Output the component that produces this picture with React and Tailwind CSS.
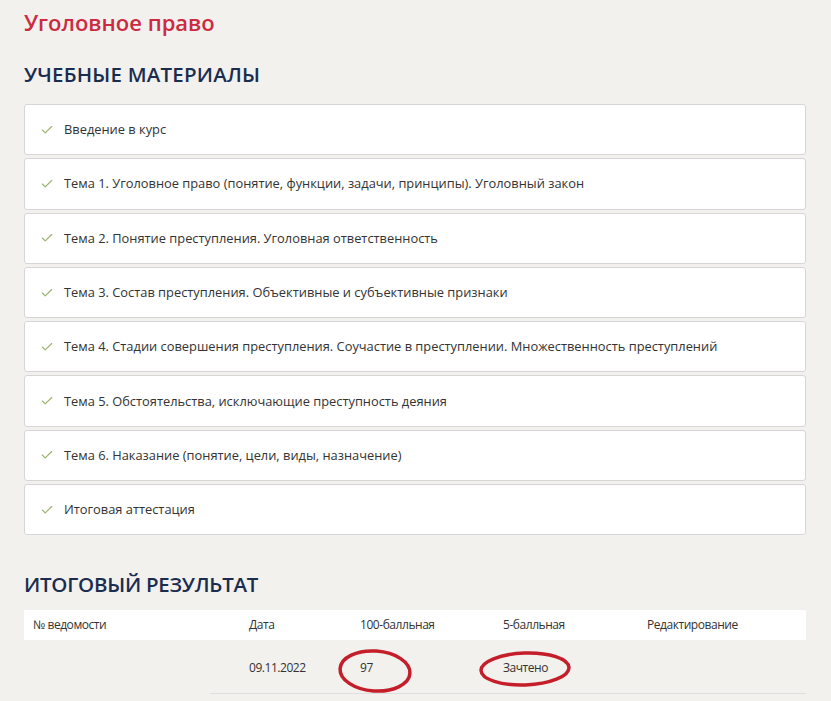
import { Check } from "lucide-react";

const materials = [
  "Введение в курс",
  "Тема 1. Уголовное право (понятие, функции, задачи, принципы). Уголовный закон",
  "Тема 2. Понятие преступления. Уголовная ответственность",
  "Тема 3. Состав преступления. Объективные и субъективные признаки",
  "Тема 4. Стадии совершения преступления. Соучастие в преступлении. Множественность преступлений",
  "Тема 5. Обстоятельства, исключающие преступность деяния",
  "Тема 6. Наказание (понятие, цели, виды, назначение)",
  "Итоговая аттестация",
];

const App = () => {
  return (
    <div
      className="min-h-[701px] bg-[#f2f1ee] px-6 pt-[6px] pb-4 text-[#333]"
      style={{ fontFamily: '"Open Sans", "Noto Sans", sans-serif' }}
    >
      <h1 className="text-[22px] leading-[32px] font-semibold text-[#cc2a40]">Уголовное право</h1>

      <h2 className="mt-[22px] text-[20.5px] leading-[28px] font-semibold text-[#1b2d4e] tracking-[0.2px]">
        УЧЕБНЫЕ МАТЕРИАЛЫ
      </h2>

      {/* Materials list */}
      <div className="mt-[16px] flex flex-col gap-[3px] w-[782px]">
        {materials.map((item, index) => (
          <div
            key={index}
            className="h-[51.3px] flex items-center bg-white border border-[#d6d6d6] rounded-[3px] pl-[15px]"
          >
            <Check className="w-[14px] h-[14px] text-[#9bb36b] mr-[10px]" strokeWidth={2} />
            <span className="text-[12.85px] text-[#333]">{item}</span>
          </div>
        ))}
      </div>

      <h2 className="mt-[35px] text-[20.5px] leading-[28px] font-semibold text-[#1b2d4e] tracking-[-0.25px]">
        ИТОГОВЫЙ РЕЗУЛЬТАТ
      </h2>

      {/* Result table */}
      <div className="mt-[12px] w-[782px] text-[12px] tracking-[-0.45px] text-[#333]">
        <div className="h-[30px] bg-white flex items-center">
          <div className="w-[225px] pl-[9px]">№ ведомости</div>
          <div className="w-[111px]">Дата</div>
          <div className="w-[143px]">100-балльная</div>
          <div className="w-[144px]">5-балльная</div>
          <div>Редактирование</div>
        </div>
        <div className="relative flex">
          <div className="w-[186px]" />
          <div className="flex-1 h-[54px] pt-[2px] flex items-center border-b border-[#dedede]">
            <div className="w-[39px]" />
            <div className="w-[111px]">09.11.2022</div>
            <div className="w-[143px]">97</div>
            <div className="w-[144px]">Зачтено</div>
          </div>
          <svg
            className="absolute left-0 top-0 pointer-events-none"
            width="782"
            height="60"
            viewBox="0 0 782 60"
          >
            <ellipse cx="351" cy="31" rx="35" ry="20" fill="none" stroke="#c41e2a" strokeWidth="3.5" transform="rotate(4 351 31)" />
            <ellipse cx="501" cy="29" rx="44" ry="16" fill="none" stroke="#c41e2a" strokeWidth="3.5" transform="rotate(-2 501 29)" />
          </svg>
        </div>
      </div>
    </div>
  );
};

export default App;
